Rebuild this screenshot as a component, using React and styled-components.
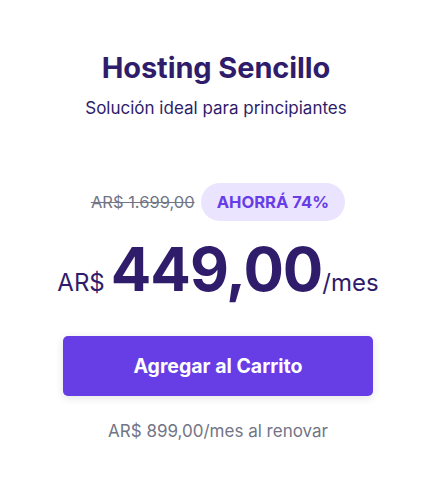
import styled, { createGlobalStyle } from "styled-components";

const GlobalStyle = createGlobalStyle`
  body {
    margin: 0;
    background: #ffffff;
    font-family: Inter, "DejaVu Sans", sans-serif;
  }
`;

const Card = styled.section`
  width: 432px;
  height: 486px;
  display: flex;
  flex-direction: column;
  align-items: center;
  padding-top: 48px;
  box-sizing: border-box;
`;

const Title = styled.h2`
  margin: 0;
  font-size: 29px;
  line-height: 40px;
  font-weight: 700;
  color: #2f1c6a;
  letter-spacing: -0.1px;
`;

const Subtitle = styled.p`
  margin: 8px 0 0;
  font-size: 17px;
  line-height: 24px;
  color: #2f1c6a;
`;

const SaleRow = styled.div`
  margin-top: 63px;
  margin-left: 4px;
  display: flex;
  align-items: center;
  gap: 6px;
`;

const OldPrice = styled.span`
  font-size: 16.5px;
  color: #727586;
  text-decoration: line-through;
`;

const Badge = styled.span`
  height: 38px;
  display: flex;
  align-items: center;
  padding: 0 16px;
  border-radius: 19px;
  background: #ebe4ff;
  color: #673de6;
  font-size: 16.6px;
  font-weight: 700;
`;

const PriceRow = styled.div`
  margin-top: 12px;
  margin-left: 4px;
  display: flex;
  align-items: baseline;
  color: #2f1c6a;
`;

const Currency = styled.span`
  font-size: 24px;
  margin-right: 6px;
`;

const Amount = styled.span`
  font-size: 60px;
  line-height: 72px;
  font-weight: 700;
  letter-spacing: -1px;
`;

const Period = styled.span`
  font-size: 24px;
`;

const CartButton = styled.button`
  margin-top: 31px;
  margin-left: 4px;
  width: 310px;
  height: 60px;
  border: none;
  border-radius: 5px;
  background: #673de6;
  color: #ffffff;
  font-family: inherit;
  font-size: 19.5px;
  font-weight: 700;
  box-shadow: 0 2px 8px rgba(29, 30, 32, 0.12);
  cursor: pointer;
`;

const Renewal = styled.p`
  margin: 23px 0 0;
  margin-left: 4px;
  font-size: 17px;
  line-height: 24px;
  color: #727586;
`;

export default function App() {
  return (
    <>
      <GlobalStyle />
      <Card>
        <Title>Hosting Sencillo</Title>
        <Subtitle>Solución ideal para principiantes</Subtitle>
        <SaleRow>
          <OldPrice>AR$ 1.699,00</OldPrice>
          <Badge>AHORRÁ 74%</Badge>
        </SaleRow>
        <PriceRow>
          <Currency>AR$</Currency>
          <Amount>449,00</Amount>
          <Period>/mes</Period>
        </PriceRow>
        <CartButton>Agregar al Carrito</CartButton>
        <Renewal>AR$ 899,00/mes al renovar</Renewal>
      </Card>
    </>
  );
}
